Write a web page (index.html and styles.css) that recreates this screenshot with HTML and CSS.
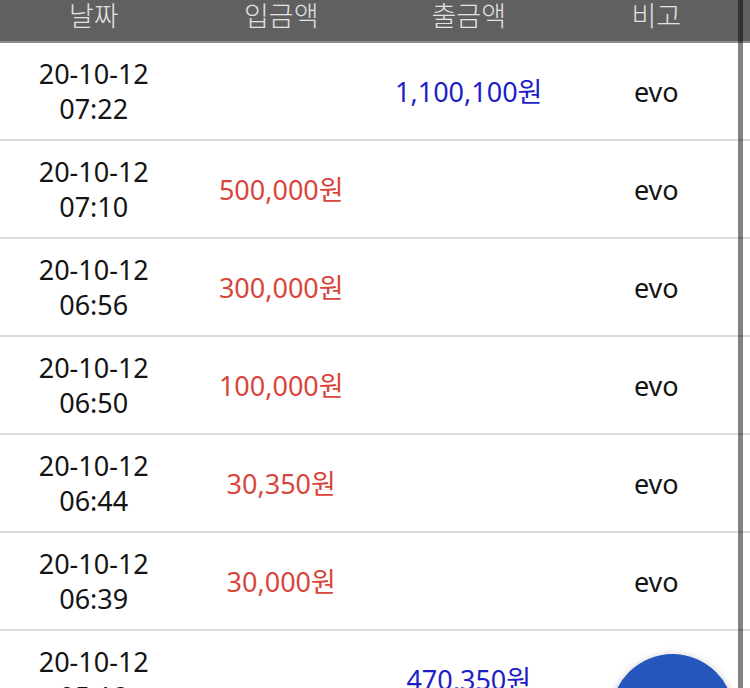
FILE: index.html
```html
<!DOCTYPE html>
<html lang="ko">
<head>
  <meta charset="UTF-8" />
  <title>입출금 내역</title>
  <link rel="stylesheet" href="styles.css">
</head>
<body>

<div class="history">
  <div class="row head">
    <div>날짜</div>
    <div>입금액</div>
    <div>출금액</div>
    <div>비고</div>
  </div>

  <div class="row">
    <div class="date">20-10-12<br>07:22</div>
    <div class="in"></div>
    <div class="out">1,100,100원</div>
    <div>evo</div>
  </div>
  <div class="row">
    <div class="date">20-10-12<br>07:10</div>
    <div class="in">500,000원</div>
    <div class="out"></div>
    <div>evo</div>
  </div>
  <div class="row">
    <div class="date">20-10-12<br>06:56</div>
    <div class="in">300,000원</div>
    <div class="out"></div>
    <div>evo</div>
  </div>
  <div class="row">
    <div class="date">20-10-12<br>06:50</div>
    <div class="in">100,000원</div>
    <div class="out"></div>
    <div>evo</div>
  </div>
  <div class="row">
    <div class="date">20-10-12<br>06:44</div>
    <div class="in">30,350원</div>
    <div class="out"></div>
    <div>evo</div>
  </div>
  <div class="row">
    <div class="date">20-10-12<br>06:39</div>
    <div class="in">30,000원</div>
    <div class="out"></div>
    <div>evo</div>
  </div>
  <div class="row">
    <div class="date">20-10-12<br>05:18</div>
    <div class="in"></div>
    <div class="out">470,350원</div>
    <div>evo</div>
  </div>
</div>

<!-- 스크롤바 + 플로팅 버튼 -->
<div class="scrollbar"></div>
<div class="fab"></div>

</body>
</html>
```

FILE: styles.css
```css
* {
  box-sizing: border-box;
}
html, body {
  margin: 0;
  height: 100%;
  overflow: hidden;
  background: #fff;
}
body {
  font-family: "Noto Sans", "Noto Sans CJK KR", sans-serif;
  font-size: 27px;
  color: #141414;
  position: relative;
}

.row {
  display: grid;
  grid-template-columns: repeat(4, 1fr);
  height: 98px;
  border-bottom: 2px solid #dcdcdc;
  text-align: center;
  align-items: center;
  line-height: 35px;
}

.row.head {
  height: 43px;
  background: #606060;
  border-bottom: 2px solid #8c8c8c;
  color: #e2e2e2;
  align-items: start;
  line-height: 30px;
  font-family: "Noto Sans CJK KR", sans-serif;
  font-weight: 300;
}

.in { color: #d8463b; }
.out { color: #1e1ec8; }

.scrollbar {
  position: absolute;
  top: 0;
  bottom: 0;
  left: 738px;
  width: 5px;
  background: rgba(0, 0, 0, 0.49);
}

.fab {
  position: absolute;
  left: 611px;
  top: 654px;
  width: 123px;
  height: 123px;
  border-radius: 50%;
  background: #2456be;
  box-shadow: 0 2px 10px rgba(0, 0, 0, 0.25);
}
```
